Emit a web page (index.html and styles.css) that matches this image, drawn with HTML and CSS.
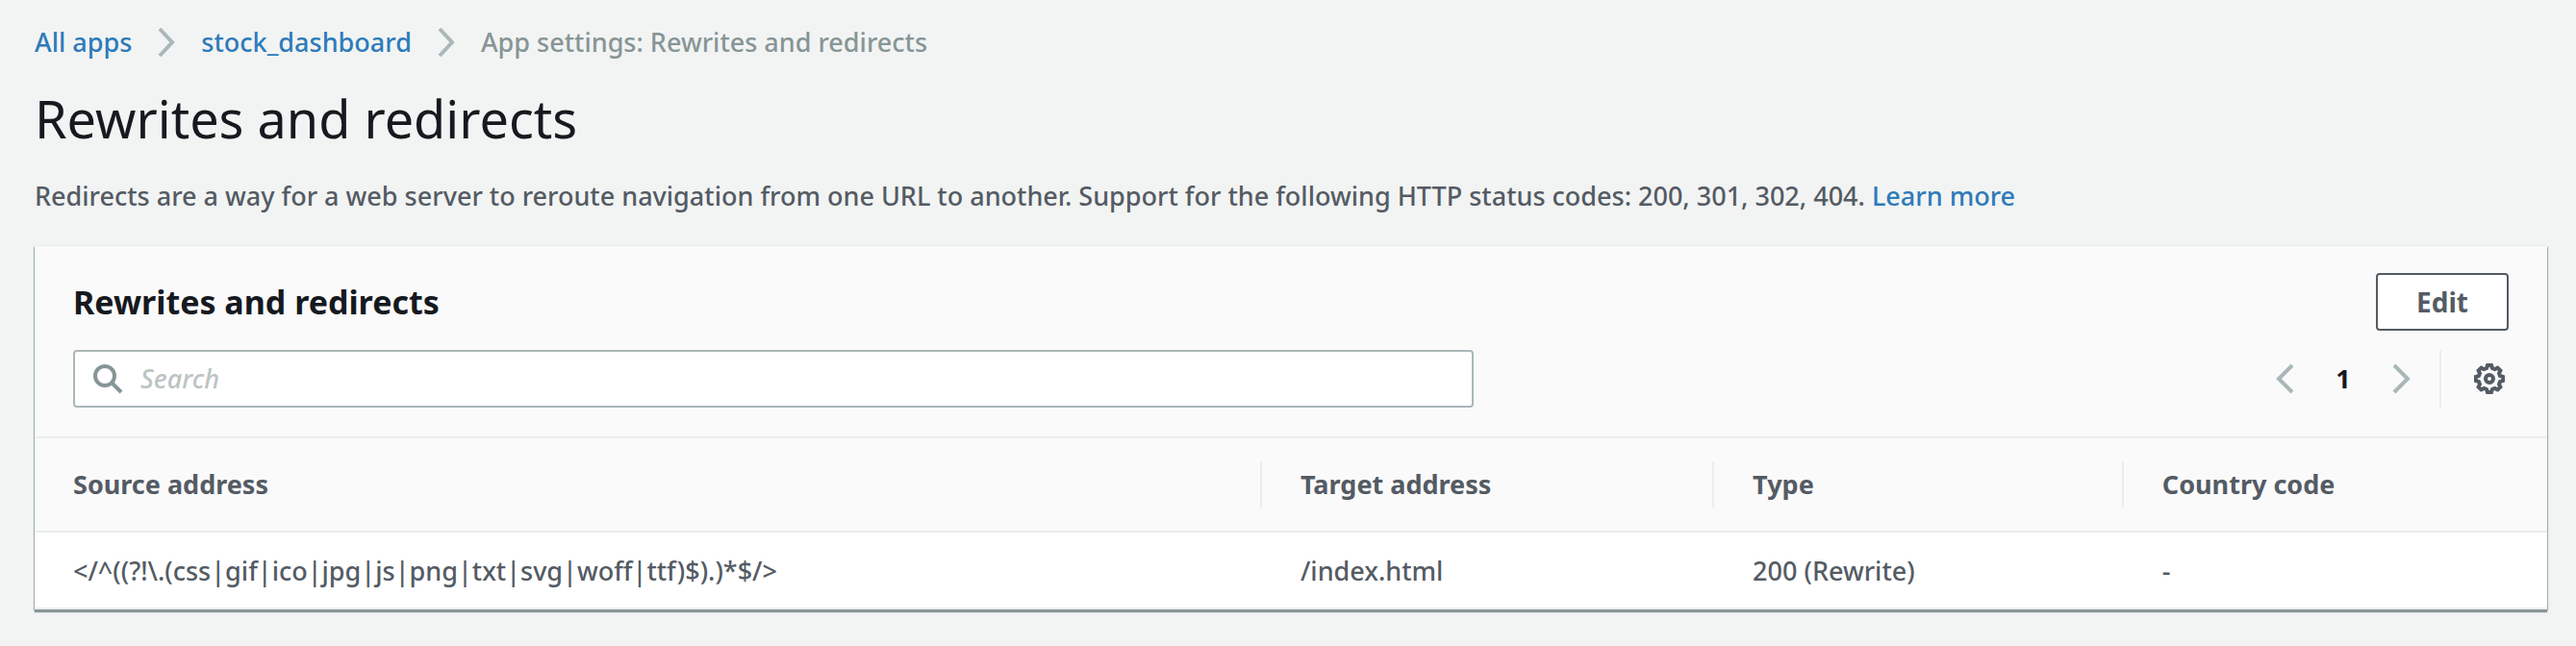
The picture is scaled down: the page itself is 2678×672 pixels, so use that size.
FILE: index.html
```html
<!DOCTYPE html>
<html lang="en">
<head>
<meta charset="utf-8">
<meta name="viewport" content="width=device-width, initial-scale=1">
<title>Rewrites and redirects</title>
<link rel="stylesheet" href="styles.css">
</head>
<body>
<main class="page">
  <nav class="breadcrumbs" aria-label="Breadcrumbs">
    <a class="link" href="#">All apps</a>
    <svg class="crumb-icon" viewBox="0 0 20 32" aria-hidden="true"><path d="M3 2l13 14L3 30"/></svg>
    <a class="link" href="#">stock_dashboard</a>
    <svg class="crumb-icon" viewBox="0 0 20 32" aria-hidden="true"><path d="M3 2l13 14L3 30"/></svg>
    <span class="crumb-current" aria-current="page">App settings: Rewrites and redirects</span>
  </nav>
  <h1 class="page-title">Rewrites and redirects</h1>
  <p class="description">Redirects are a way for a web server to reroute navigation from one URL to another. Support for the following HTTP status codes: 200, 301, 302, 404. <a class="link" href="#">Learn more</a></p>

  <section class="panel">
    <header class="panel-header">
      <div class="panel-row">
        <h2 class="panel-title">Rewrites and redirects</h2>
        <button class="edit-button" type="button">Edit</button>
      </div>
      <div class="panel-row">
        <label class="search">
          <svg class="search-icon" viewBox="0 0 32 32" aria-hidden="true"><circle cx="13" cy="13" r="10"/><path d="M20 20l10 10"/></svg>
          <input class="search-input" type="search" placeholder="Search" aria-label="Search">
        </label>
        <div class="tools">
          <button class="icon-button" type="button" aria-label="Previous page"><svg class="arrow-icon" viewBox="0 0 20 32" aria-hidden="true"><path d="M17 2L3 16l14 14"/></svg></button>
          <button class="page-number" type="button" aria-current="page">1</button>
          <button class="icon-button" type="button" aria-label="Next page"><svg class="arrow-icon" viewBox="0 0 20 32" aria-hidden="true"><path d="M3 2l14 14L3 30"/></svg></button>
          <span class="divider"></span>
          <button class="gear-button" type="button" aria-label="Preferences"><svg class="gear-icon" viewBox="0 0 32 32" aria-hidden="true"><path d="M14 2h4l1 3 2.600 1 2.900-1.400 2.900 2.900L26 10.400l1 2.600 3 1v4l-3 1-1 2.600 1.400 2.900-2.900 2.900L21.600 26 19 27l-1 3h-4l-1-3-2.600-1-2.900 1.400-2.900-2.900L6 21.600 5 19l-3-1v-4l3-1 1-2.600-1.400-2.900 2.900-2.900L10.400 6 13 5z"/><circle cx="16" cy="16" r="4"/></svg></button>
        </div>
      </div>
    </header>
    <table class="table">
      <colgroup><col class="col-source"><col class="col-target"><col class="col-type"><col></colgroup>
      <thead>
        <tr><th scope="col"><div class="head-cell">Source address</div></th><th scope="col"><div class="head-cell">Target address</div></th><th scope="col"><div class="head-cell">Type</div></th><th scope="col"><div class="head-cell">Country code</div></th></tr>
      </thead>
      <tbody>
        <tr><td>&lt;/^((?!\.(css|gif|ico|jpg|js|png|txt|svg|woff|ttf)$).)*$/&gt;</td><td>/index.html</td><td>200 (Rewrite)</td><td>-</td></tr>
      </tbody>
    </table>
  </section>
</main>
</body>
</html>
```
FILE: styles.css
```css
* { box-sizing: border-box; }

body {
  margin: 0;
  background: #f2f4f3;
  color: #545b64;
  font: 500 27px/44px "Noto Sans", "Open Sans", sans-serif;
}

button, input { font: inherit; }

.page { padding: 22px 30px 36px 36px; }

.link { color: #2e7bba; text-decoration: none; }
.link:hover { text-decoration: underline; }

.breadcrumbs { display: flex; align-items: center; gap: 26px; }
.crumb-icon { width: 20px; height: 32px; }
.crumb-current { color: #879596; }

.crumb-icon path,
.arrow-icon path { fill: none; stroke: #aab7b8; stroke-width: 4; }

.page-title {
  margin: 22px 0 0;
  color: #16191f;
  font-size: 54px;
  font-weight: 400;
  line-height: 70px;
}

.description { margin: 24px 0 30px; }

.panel {
  background: #fff;
  box-shadow: 0 3px 1px #879596, 1px 1px 1px #aab7b8, -1px 1px 1px #aab7b8, 0 -1px 1px #eaeded;
}

.panel-header {
  display: grid;
  gap: 20px;
  padding: 28px 40px 30px;
  background: #fafafa;
  border-bottom: 2px solid #eaeded;
}

.panel-row { display: flex; align-items: center; justify-content: space-between; }

.panel-title { margin: 0; color: #16191f; font-size: 34px; font-weight: 700; }

.edit-button {
  height: 60px;
  padding: 0 40px;
  background: #fff;
  border: 2px solid #545b64;
  border-radius: 4px;
  color: #545b64;
  font-size: 28px;
  font-weight: 700;
}

.search {
  display: flex;
  align-items: center;
  gap: 18px;
  width: 57.5%;
  height: 60px;
  padding: 0 18px;
  background: #fff;
  border: 2px solid #aab7b8;
  border-radius: 4px;
}

.search-icon { flex: none; width: 32px; height: 32px; }
.search-icon * { fill: none; stroke: #879596; stroke-width: 4; }
.search-input { flex: 1; min-width: 0; padding: 0; border: 0; outline: 0; background: none; }
.search-input::placeholder { color: #bbc4c4; font-style: italic; opacity: 1; }

.tools { display: flex; align-items: center; }
.icon-button,
.gear-button,
.page-number { display: flex; align-items: center; justify-content: center; width: 60px; height: 60px; padding: 0; background: none; border: 0; }
.gear-button { width: 40px; }
.page-number { color: #16191f; font-weight: 700; }
.arrow-icon { width: 20px; height: 32px; }
.divider { width: 2px; height: 60px; margin: 0 30px 0 10px; background: #eaeded; }
.gear-icon { width: 32px; height: 32px; }
.gear-icon * { fill: none; stroke: #545b64; stroke-width: 4; }

.table { width: 100%; border-collapse: collapse; table-layout: fixed; text-align: left; }
.col-source { width: 48.85%; }
.col-target { width: 18%; }
.col-type { width: 16.3%; }

.table th { padding: 24px 0; background: #fafafa; border-bottom: 2px solid #eaeded; }
.table td { padding: 18px 40px 16px; border-bottom: 2px solid #eaeded; }
.head-cell { padding: 2px 40px; border-right: 2px solid #eaeded; }
.table th:last-child .head-cell { border-right: 0; }
```
